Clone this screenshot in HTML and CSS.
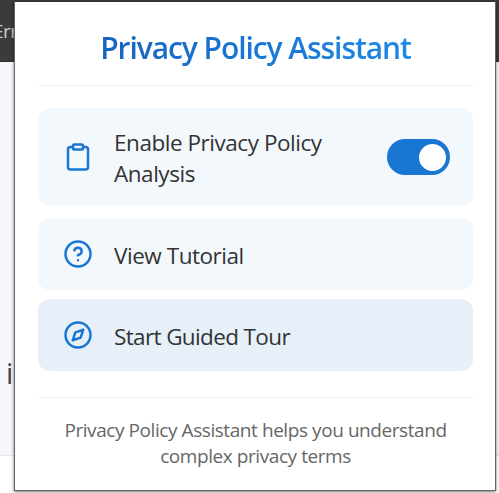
FILE: index.html
```
<!DOCTYPE html>
<html lang="en">
<head>
<meta charset="utf-8">
<title>Privacy Policy Assistant</title>
<link rel="stylesheet" href="styles.css">
</head>
<body>
<div class="backdrop">
  <div class="topbar"><span class="topbar-text">Err</span></div>
  <div class="page"><span class="page-text">i</span></div>
  <div class="page-end"></div>
</div>
<main class="popup">
  <header class="header"><h1 class="title">Privacy Policy Assistant</h1></header>
  <section class="menu">
    <div class="item item-tall">
      <svg class="icon" viewBox="0 0 24 24"><path d="M16 4h2a2 2 0 0 1 2 2v14a2 2 0 0 1-2 2H6a2 2 0 0 1-2-2V6a2 2 0 0 1 2-2h2"/><rect x="8" y="2" width="8" height="4" rx="1"/></svg>
      <span class="label label-enable">Enable Privacy Policy<br>Analysis</span>
      <span class="toggle"><span class="knob"></span></span>
    </div>
    <div class="item item-tutorial">
      <svg class="icon" viewBox="0 0 24 24"><circle cx="12" cy="12" r="10"/><path d="M9.09 9a3 3 0 0 1 5.83 1c0 2-3 3-3 3M12 17h.01"/></svg>
      <span class="label label-single">View Tutorial</span>
    </div>
    <div class="item item-active">
      <svg class="icon" viewBox="0 0 24 24"><circle cx="12" cy="12" r="10"/><path d="M16.24 7.76l-2.12 6.36-6.36 2.12 2.12-6.36z"/></svg>
      <span class="label label-single label-tour">Start Guided Tour</span>
    </div>
  </section>
  <footer class="footer">Privacy Policy Assistant helps you understand<br>complex privacy terms</footer>
</main>
</body>
</html>
```
FILE: styles.css
```
* { box-sizing: border-box; }
body {
  margin: 0;
  width: 499px;
  height: 493px;
  overflow: hidden;
  position: relative;
  font-family: "Open Sans", "Noto Sans", sans-serif;
  background: #fff;
}
.backdrop { height: 493px; display: flex; flex-direction: column; overflow: hidden; }
.topbar { height: 62px; flex: none; background: #3b3b3b; border-bottom: 1px solid #303030; padding-top: 18px; }
.topbar-text { display: block; margin-left: -7px; font-size: 19px; line-height: 26px; letter-spacing: -.5px; color: #d0d0d0; }
.page { height: 394px; flex: none; background: #f5f7fc; border-bottom: 1px solid #e5e8ef; padding: 291px 0 0 6px; }
.page-text { display: block; font-size: 29px; line-height: 40px; color: #444; }
.page-end { flex: 1; background: #fff; }
.popup {
  position: absolute;
  left: 14px;
  top: 1px;
  width: 482px;
  height: 490px;
  padding: 0 22px 0 23px;
  background: #fff;
  border: 1px solid #666;
  border-top-color: #343434;
  box-shadow: 0 1px 3px rgba(0, 0, 0, .55);
}
.header { height: 84px; padding-top: 24px; border-bottom: 1px solid #e8f0f9; text-align: center; }
.title {
  display: inline-block;
  margin: 0;
  font-size: 30px;
  line-height: 44px;
  font-weight: 600;
  letter-spacing: -1.07px;
  white-space: nowrap;
  background: linear-gradient(90deg, #1565c0, #1e88e5);
  -webkit-background-clip: text;
  background-clip: text;
  color: transparent;
}
.menu { padding-top: 22px; }
.item { display: flex; align-items: center; height: 72px; padding: 0 23px 0 25px; border-radius: 12px; background: #f3f8fc; }
.item-tall { height: 98px; margin-bottom: 12px; }
.item-tutorial { margin-bottom: 9px; }
.item-active { background: #e7f0f9; }
.icon { flex: none; width: 30px; height: 30px; fill: none; stroke: #1976d2; stroke-width: 2; stroke-linecap: round; stroke-linejoin: round; }
.label { flex: 1; margin-left: 21px; font-size: 22.5px; line-height: 31px; letter-spacing: -.46px; color: #333; white-space: nowrap; }
.label-enable { padding-top: 1px; }
.label-single { padding-top: 2px; }
.label-tour { letter-spacing: -.63px; }
.toggle { flex: none; display: flex; width: 63px; height: 36px; padding: 5px 4px; border-radius: 18px; background: #1976d2; justify-content: flex-end; }
.knob { width: 27px; height: 27px; border-radius: 50%; background: #fff; }
.footer { margin-top: 26px; border-top: 1px solid #e8f0f9; padding-top: 19px; text-align: center; font-size: 19px; line-height: 26px; letter-spacing: -.43px; color: #666; white-space: nowrap; }
```
